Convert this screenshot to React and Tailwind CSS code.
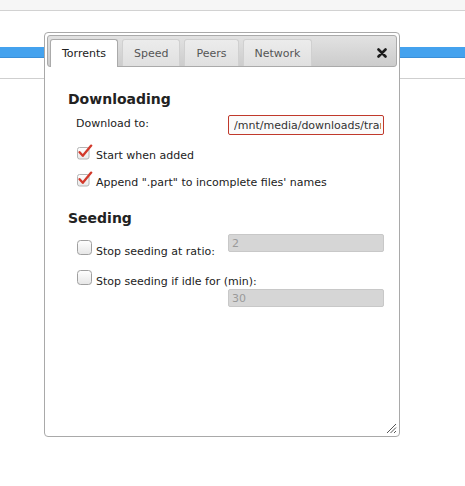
import { useState } from "react";

const font = { fontFamily: '"DejaVu Sans", Verdana, sans-serif' };

const tabs = ["Torrents", "Speed", "Peers", "Network"];

const Check = ({ checked }) =>
  checked ? (
    <svg width="16" height="16" viewBox="0 0 16 16" className="shrink-0">
      <defs>
        <linearGradient id="cbg" x1="0" y1="0" x2="0" y2="1">
          <stop offset="0" stopColor="#ffffff" />
          <stop offset="1" stopColor="#e8e8e8" />
        </linearGradient>
      </defs>
      <rect x="0.5" y="3.5" width="11.5" height="11.5" rx="2" fill="url(#cbg)" stroke="#b4b4b4" />
      <path d="M2.6 8.2 L5.8 11.8 L14.2 1.6" fill="none" stroke="#d2392b" strokeWidth="2.3" strokeLinecap="round" strokeLinejoin="round" />
    </svg>
  ) : (
    <svg width="16" height="16" viewBox="0 0 16 16" className="shrink-0">
      <defs>
        <linearGradient id="ubg" x1="0" y1="0" x2="0" y2="1">
          <stop offset="0" stopColor="#ffffff" />
          <stop offset="1" stopColor="#e6e6e6" />
        </linearGradient>
      </defs>
      <rect x="0.5" y="0.5" width="14" height="14" rx="3" fill="url(#ubg)" stroke="#a0a0a0" />
    </svg>
  );

const CheckRow = ({ label, checked, className = "" }) => (
  <label className={`flex items-start gap-[3px] ${className}`}>
    <Check checked={checked} />
    <span className="mt-[5px] text-[11px] leading-[13px] text-[#222] whitespace-nowrap">{label}</span>
  </label>
);

const Field = ({ value, disabled, className = "" }) => (
  <input
    readOnly
    value={value}
    disabled={disabled}
    className={
      disabled
        ? `h-[18px] w-[156px] rounded-[2px] border border-[#c8c8c8] bg-[#d6d6d6] px-[3px] text-[11px] leading-[13px] text-[#9a9a9a] outline-none ${className}`
        : `h-[20px] w-[156px] rounded-[2px] border-[1.5px] border-[#c0392b] bg-[#fafafa] pl-[5px] pr-[2px] text-[11px] leading-[13px] text-[#333] outline-none ${className}`
    }
    style={font}
  />
);

export default function App() {
  const [active, setActive] = useState("Torrents");

  return (
    <div className="relative h-[486px] w-[465px] overflow-hidden bg-white" style={font}>
      {/* page behind the dialog */}
      <div className="h-[11px] border-b border-[#d2d2d2] bg-[#f6f6f6]" />
      <div className="mt-[36px] h-[11px] border-b border-[#3a8fd8] bg-[#44a2ee]" />
      <div className="mt-[20px] border-t border-[#cfcfcf]" />

      {/* preferences dialog */}
      <div className="absolute left-[44px] top-[32px] flex h-[405px] w-[356px] flex-col rounded-[4px] border border-[#a9a9a9] bg-white p-[2px]">
        <div className="relative flex h-[32px] items-end gap-[4px] rounded-[3px] border border-[#aaaaaa] bg-gradient-to-b from-[#e2e2e2] to-[#cccccc] pl-[2px]">
          {tabs.map((t) =>
            t === active ? (
              <button
                key={t}
                onClick={() => setActive(t)}
                className="relative -mb-[1px] h-[28px] rounded-t-[3px] border border-b-0 border-[#aaaaaa] bg-white px-[11px] text-[11px] leading-[13px] text-[#212121]"
              >
                {t}
              </button>
            ) : (
              <button
                key={t}
                onClick={() => setActive(t)}
                className="h-[27px] rounded-t-[3px] border border-b-0 border-[#d0d0d0] bg-gradient-to-b from-[#ececec] to-[#e0e0e0] px-[11px] text-[11px] leading-[13px] text-[#555555]"
              >
                {t}
              </button>
            )
          )}
          <svg width="10" height="10" viewBox="0 0 10 10" className="absolute right-[9px] top-[12px]">
            <path d="M1.5 1.5 L8.5 8.5 M8.5 1.5 L1.5 8.5" stroke="#1c1c1c" strokeWidth="2.6" strokeLinecap="round" />
          </svg>
        </div>

        <div className="flex flex-col pl-[21px] pr-[13px]">
          <h3 className="mt-[24px] text-[14px] font-bold leading-[17px] text-[#222]">Downloading</h3>

          <div className="mt-[7px] flex items-start justify-between">
            <span className="ml-[8px] mt-[2px] text-[11px] leading-[13px] text-[#222]">Download to:</span>
            <Field value="/mnt/media/downloads/transmission" />
          </div>

          <CheckRow className="ml-[9px] mt-[9px]" checked label="Start when added" />
          <CheckRow className="ml-[9px] mt-[9px]" checked label={'Append ".part" to incomplete files\' names'} />

          <h3 className="mt-[21px] text-[14px] font-bold leading-[17px] text-[#222]">Seeding</h3>

          <div className="mt-[7px] flex items-start justify-between">
            <CheckRow className="ml-[9px] mt-[6px]" label="Stop seeding at ratio:" />
            <Field value="2" disabled />
          </div>

          <CheckRow className="ml-[9px] mt-[12px]" label="Stop seeding if idle for (min):" />
          <div className="mt-[1px] flex justify-end">
            <Field value="30" disabled />
          </div>
        </div>

        {/* resize grip */}
        <svg width="12" height="12" viewBox="0 0 12 12" className="absolute bottom-[2px] right-[2px]">
          <path d="M11 2 L2 11 M11 5.5 L5.5 11 M11 9 L9 11" stroke="#555" strokeWidth="1" />
        </svg>
      </div>
    </div>
  );
}
